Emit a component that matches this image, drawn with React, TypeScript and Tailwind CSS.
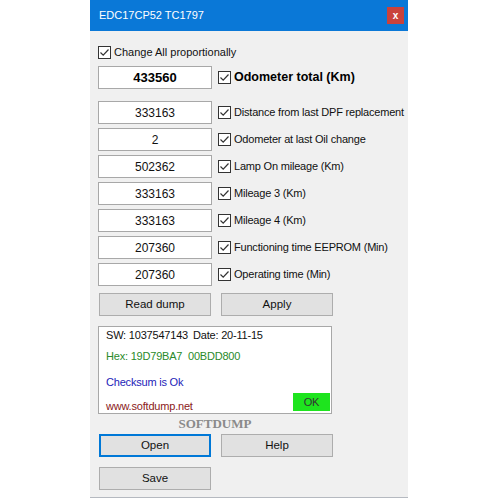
import React from "react";

const rows = [
  { v: "333163", label: "Distance from last DPF replacement" },
  { v: "2", label: "Odometer at last Oil change" },
  { v: "502362", label: "Lamp On mileage (Km)" },
  { v: "333163", label: "Mileage 3 (Km)" },
  { v: "333163", label: "Mileage 4 (Km)" },
  { v: "207360", label: "Functioning time EEPROM (Min)" },
  { v: "207360", label: "Operating time (Min)" },
];

function Check() {
  return (
    <span className="w-[13px] h-[13px] border border-[#333] bg-white flex items-center justify-center shrink-0">
      <svg width="11" height="11" viewBox="0 0 11 11">
        <path d="M1.5 5.5 L4.2 8.2 L9.5 2.5" fill="none" stroke="#333" strokeWidth="1.2" />
      </svg>
    </span>
  );
}

function Btn({ children, focus }: { children: React.ReactNode; focus?: boolean }) {
  return (
    <div
      className={
        "w-[112px] h-[23px] shrink-0 flex items-center justify-center bg-[#e1e1e1] text-[11.5px] text-[#111] " +
        (focus ? "border-2 border-[#0078d7]" : "border border-[#adadad]")
      }
    >
      {children}
    </div>
  );
}

export default function App() {
  return (
    <div className="w-[500px] h-[500px] bg-white" style={{ fontFamily: '"Liberation Sans", Arial, sans-serif' }}>
      <div className="ml-[90px] w-[318px] h-[498px] bg-[#f0f0f0] flex flex-col border-b border-[#b5b9c0]">
        <div className="h-[31px] bg-[#0a78d7] flex items-center justify-between pl-[9px] pr-[4px]">
          <span className="text-white text-[11px]">EDC17CP52 TC1797</span>
          <span className="w-[17px] h-[17px] bg-[#c9423c] text-white text-[10px] font-bold flex items-center justify-center leading-none">
            x
          </span>
        </div>
        <div className="flex flex-col pl-[8px] pt-[15px]">
          <div className="flex items-center gap-[3px] h-[13px] text-[11px] text-[#111]">
            <Check />
            <span className="whitespace-nowrap">Change All proportionally</span>
          </div>
          <div className="flex items-center gap-[6px] mt-[7px]">
            <div className="w-[114px] h-[23px] shrink-0 bg-white border border-[#a8a8a8] flex items-center justify-center text-[13px] font-bold text-black">
              433560
            </div>
            <Check />
            <span className="text-[12.5px] font-bold text-black -ml-[3px] whitespace-nowrap">Odometer total (Km)</span>
          </div>
          <div className="flex flex-col gap-[4px] mt-[12px]">
            {rows.map((r, i) => (
              <div key={i} className="flex items-center gap-[6px]">
                <div className="w-[114px] h-[23px] shrink-0 bg-white border border-[#a8a8a8] flex items-center justify-center text-[12px] text-[#111]">
                  {r.v}
                </div>
                <Check />
                <span className="text-[11px] text-[#111] -ml-[3px] whitespace-nowrap tracking-[-0.2px]">{r.label}</span>
              </div>
            ))}
          </div>
          <div className="flex gap-[10px] mt-[7px] pl-[1px]">
            <Btn>Read dump</Btn>
            <Btn>Apply</Btn>
          </div>
          <div className="mt-[10px] w-[234px] h-[88px] bg-white border border-[#a8a8a8] relative text-[11px] px-[7px] whitespace-nowrap tracking-[-0.2px]">
            <div className="flex text-[#111] h-[16px] items-center">
              <span className="w-[87px]">SW: 1037547143</span>
              <span>Date: 20-11-15</span>
            </div>
            <div className="text-[#2a8a2a] h-[16px] flex items-center mt-[5px]">Hex: 19D79BA7&nbsp;&nbsp;00BDD800</div>
            <div className="text-[#2323b8] h-[16px] flex items-center mt-[10px]">Checksum is Ok</div>
            <div className="text-[#8b2020] h-[16px] flex items-center mt-[8px]">www.softdump.net</div>
            <div className="absolute right-[1px] bottom-[2px] w-[37px] h-[18px] bg-[#1ee41e] flex items-center justify-center text-[#333]">
              OK
            </div>
          </div>
          <div className="w-[234px] text-center text-[13px] font-bold text-[#8a8a8a] h-[20px] leading-[20px]" style={{ fontFamily: '"Liberation Serif", serif' }}>
            SOFTDUMP
          </div>
          <div className="flex gap-[10px] pl-[1px]">
            <Btn focus>Open</Btn>
            <Btn>Help</Btn>
          </div>
          <div className="flex mt-[10px] pl-[1px]">
            <Btn>Save</Btn>
          </div>
        </div>
      </div>
    </div>
  );
}
